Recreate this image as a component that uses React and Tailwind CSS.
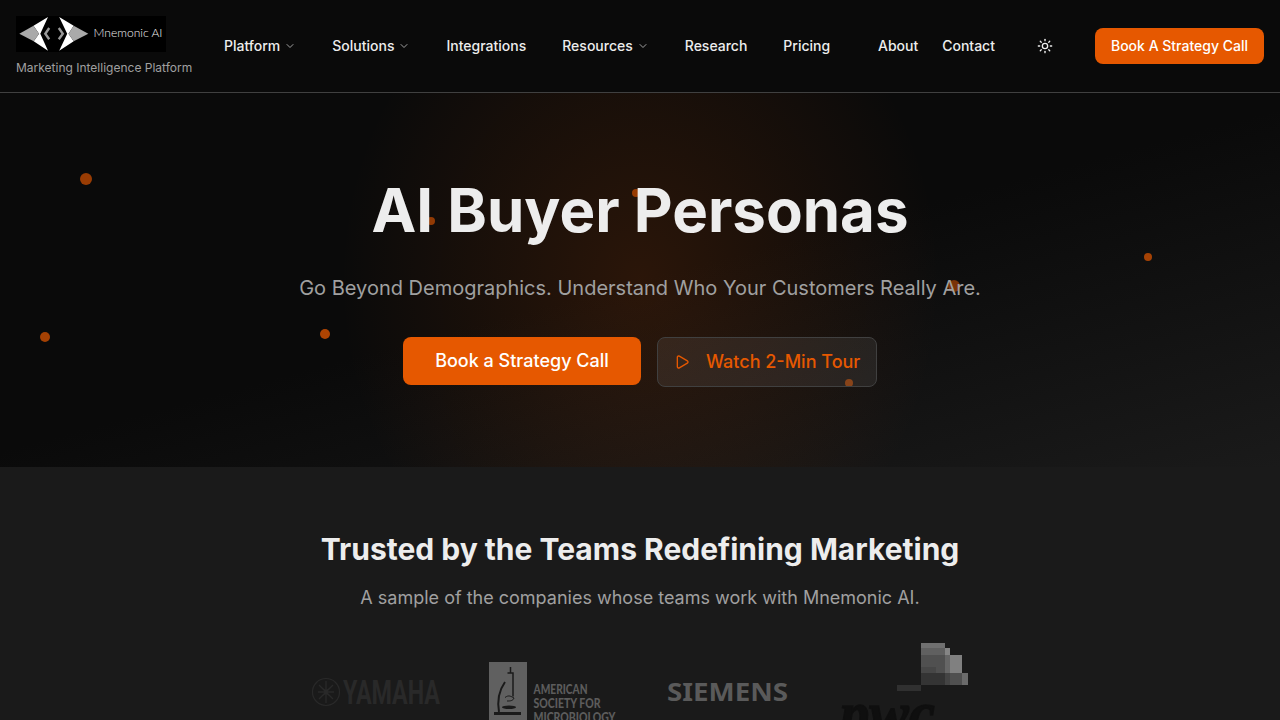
import React from "react";
import { ChevronDown, Play, Sun } from "lucide-react";

const NAV_ITEMS = [
  { label: "Platform", hasMenu: true },
  { label: "Solutions", hasMenu: true },
  { label: "Integrations" },
  { label: "Resources", hasMenu: true },
  { label: "Research" },
  { label: "Pricing" },
];

// Floating dots of the hero background
const PARTICLES = [
  "left-[80px] top-[80px] size-3 opacity-65",
  "left-[40px] top-[239px] size-2.5 opacity-70",
  "left-[320px] top-[236px] size-2.5 opacity-75",
  "left-[427px] top-[124px] size-2 opacity-60",
  "left-[632px] top-[96px] size-2 opacity-60",
  "left-[948px] top-[187px] size-3 opacity-50",
  "left-[1144px] top-[160px] size-2 opacity-70",
  "left-[845px] top-[286px] size-2 opacity-50",
];

function Logo() {
  return (
    <svg width="150" height="36" viewBox="0 0 150 36" className="block bg-black">
      <path d="M32 1 17.5 9.7 23 17.7 17.7 25.3 32 34.8 24.3 17.7Z" fill="#fff" />
      <path d="M3.3 17.7 17.5 9.7 23 17.7 17.7 25.3Z" fill="#aaa" />
      <path d="M43.2 1 57.7 9.7 52.5 17.7 57.7 25.3 43.2 34.8 51.2 17.7Z" fill="#fff" />
      <path d="M72.3 17.7 57.7 9.7 52.5 17.7 57.7 25.3Z" fill="#aaa" />
      <path d="M33.2 12 29.3 17.7 33.2 23.2M42.8 12 46.8 17.7 42.8 23.2" fill="none" stroke="#999" strokeWidth="2.4" />
      <text x="77.5" y="21.2" textLength="69" lengthAdjust="spacingAndGlyphs" fill="#f0f0f0" className="font-['Lato',sans-serif] text-[12px] font-light">
        Mnemonic AI
      </text>
    </svg>
  );
}

function Header() {
  return (
    <header className="flex h-[93px] items-center border-b border-[#404040] bg-[#0a0a0a] px-4">
      <div className="w-[176px] shrink-0">
        <Logo />
        <p className="mt-2 whitespace-nowrap text-xs text-[#a0a0a0]">Marketing Intelligence Platform</p>
      </div>

      <nav className="ml-8 flex items-center gap-9 text-sm font-medium">
        {NAV_ITEMS.map((item) => (
          <a key={item.label} href="#" className="flex items-center">
            {item.label}
            {item.hasMenu && <ChevronDown size={12} className="ml-1 text-[#a0a0a0]" />}
          </a>
        ))}
      </nav>

      <div className="ml-auto flex items-center text-sm font-medium">
        <a href="#">About</a>
        <a href="#" className="ml-6">Contact</a>
        <button className="ml-8 flex size-9 items-center justify-center">
          <Sun size={16} />
        </button>
        <a href="#" className="ml-8 flex h-9 items-center rounded-lg bg-[#e65800] px-4 text-white">
          Book A Strategy Call
        </a>
      </div>
    </header>
  );
}

function Hero() {
  return (
    <section className="relative h-[374px] overflow-hidden bg-[linear-gradient(165deg,#0a0a0a_0%,#0a0a0a_50%,#1a1a1a_100%)]">
      <div className="absolute left-[240px] top-[-273px] h-[920px] w-[800px] bg-[radial-gradient(ellipse_closest-side,rgba(230,88,0,0.15)_0%,transparent_75%)]" />
      {PARTICLES.map((cls) => (
        <span key={cls} className={`absolute rounded-full bg-[#e65800] ${cls}`} />
      ))}

      <div className="relative flex flex-col items-center pt-[87px]">
        <h1 className="text-[60px] font-bold leading-[60px] text-[#ededed]">AI Buyer Personas</h1>
        <p className="mt-[34px] text-xl text-[#a0a0a0]">
          Go Beyond Demographics. Understand Who Your Customers Really Are.
        </p>
        <div className="mt-[35px] flex gap-4 text-lg font-medium">
          <button className="flex h-12 w-[238px] items-center justify-center rounded-lg bg-[#e65800] text-white">
            Book a Strategy Call
          </button>
          <button className="flex h-[50px] w-[220px] items-center rounded-lg border border-[#404040] bg-white/7 pl-4 text-[#e65800]">
            <Play size={16} className="mr-4" />
            Watch 2-Min Tour
          </button>
        </div>
      </div>
    </section>
  );
}

function YamahaLogo() {
  return (
    <svg width="130" height="40" viewBox="0 0 130 40" className="mt-[35px]" fill="none" stroke="#292929">
      <circle cx="15" cy="15" r="13.5" strokeWidth="1.2" />
      <path d="M15 4v22M8 8l14 14M22 8 8 22M7 15h16M11 11l4 3 4-3M11 19l4-3 4 3" strokeWidth="1.3" />
      <text x="32" y="27" textLength="97" lengthAdjust="spacingAndGlyphs" fill="#292929" stroke="none" className="font-['Roboto',sans-serif] text-[34px] font-bold">
        YAMAHA
      </text>
    </svg>
  );
}

function MicrobiologyLogo() {
  return (
    <svg width="130" height="80" viewBox="0 0 130 80" className="mt-5">
      <rect width="38" height="80" fill="#606060" />
      <g fill="none" stroke="#1a1a1a">
        <path d="M21.5 5v6M18.5 11H24v23.5" strokeWidth="1.5" />
        <path d="M16 20C11 27 8 38 10 50" strokeWidth="2" />
        <path d="M16 35.5c4-3 6-1 9 .5-1 3-4 3-7 3" strokeWidth="1" />
        <path d="M5 51.5h27" strokeWidth="3" />
      </g>
      <ellipse cx="20" cy="45.3" rx="7" ry="1.7" fill="#1a1a1a" />
      <g fill="#5c5c5c" className="font-['Lato',sans-serif] text-[12.5px] font-black">
        <text x="44.5" y="31.5" textLength="54" lengthAdjust="spacingAndGlyphs">AMERICAN</text>
        <text x="44.5" y="45.5" textLength="67" lengthAdjust="spacingAndGlyphs">SOCIETY FOR</text>
        <text x="44.5" y="59.5" textLength="82" lengthAdjust="spacingAndGlyphs">MICROBIOLOGY</text>
      </g>
    </svg>
  );
}

function SiemensLogo() {
  return (
    <svg width="124" height="40" viewBox="0 0 124 40" className="mt-[38px]">
      <text x="0" y="21" textLength="121" lengthAdjust="spacingAndGlyphs" fill="#5a5a5a" className="font-['Noto_Sans',sans-serif] text-[25px] font-bold">
        SIEMENS
      </text>
    </svg>
  );
}

function PwcLogo() {
  return (
    <svg width="130" height="100" viewBox="0 0 130 100" className="ml-px mt-px shrink-0" shapeRendering="crispEdges">
      <rect x="81" y="0" width="24" height="5" fill="#707070" />
      <rect x="81" y="5" width="24" height="7" fill="#606060" />
      <rect x="105" y="5" width="5" height="7" fill="#858585" />
      <rect x="81" y="12" width="24" height="18" fill="#505050" />
      <rect x="81" y="24" width="15" height="6" fill="#474747" />
      <rect x="105" y="12" width="5" height="18" fill="#666" />
      <rect x="110" y="12" width="12" height="18" fill="#808080" />
      <rect x="81" y="30" width="24" height="12" fill="#343434" />
      <rect x="105" y="30" width="5" height="12" fill="#444" />
      <rect x="110" y="30" width="12" height="12" fill="#505050" />
      <rect x="122" y="30" width="6" height="12" fill="#6b6b6b" />
      <rect x="57" y="42" width="24" height="6" fill="#303030" />
      <text x="0" y="91" textLength="95" lengthAdjust="spacingAndGlyphs" fill="#0f0f0f" stroke="#0f0f0f" strokeWidth="1.5" className="font-['Liberation_Serif',serif] text-[62px] font-bold italic">
        pwc
      </text>
    </svg>
  );
}

function TrustedBy() {
  return (
    <section className="flex h-[253px] flex-col items-center overflow-hidden bg-[#1a1a1a] pt-16">
      <h2 className="text-[30px] font-bold leading-9">Trusted by the Teams Redefining Marketing</h2>
      <p className="mt-[17px] text-lg text-[#a0a0a0]">
        A sample of the companies whose teams work with Mnemonic AI.
      </p>
      <div className="mt-[30px] flex w-[658px] shrink-0 items-start">
        <div className="w-[178px] shrink-0"><YamahaLogo /></div>
        <div className="w-[178px] shrink-0"><MicrobiologyLogo /></div>
        <div className="w-[172px] shrink-0"><SiemensLogo /></div>
        <PwcLogo />
      </div>
    </section>
  );
}

export default function App() {
  return (
    <div className="h-screen overflow-hidden bg-[#0a0a0a] font-['Inter',sans-serif] text-[#ededed]">
      <Header />
      <Hero />
      <TrustedBy />
    </div>
  );
}
